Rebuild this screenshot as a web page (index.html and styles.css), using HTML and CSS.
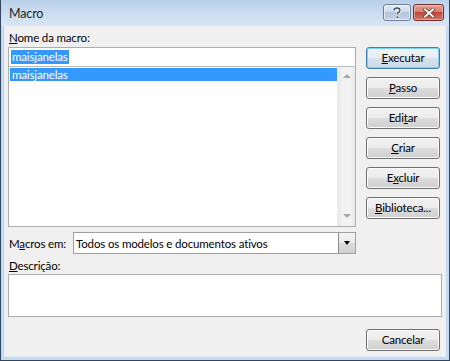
FILE: index.html
```html
<!DOCTYPE html>
<html lang="pt">
<head>
<meta charset="utf-8">
<title>Macro</title>
<link rel="stylesheet" href="styles.css">
</head>
<body>
<div class="window">
  <div class="titlebar">
    <span class="title">Macro</span>
    <div class="caption-buttons">
      <div class="cbtn help">
        <svg width="10" height="12" viewBox="0 0 10 12"><path d="M2 3.5 Q2 1 5 1 Q8 1 8 3.3 Q8 5 5.5 6 L5.5 7.5" fill="none" stroke="#fff" stroke-width="3"/><path d="M2 3.5 Q2 1 5 1 Q8 1 8 3.3 Q8 5 5.5 6 L5.5 7.5" fill="none" stroke="#3b4a5e" stroke-width="1.4"/><rect x="4.2" y="9" width="2.6" height="2.4" fill="#3b4a5e" stroke="#fff" stroke-width="0.6"/></svg>
      </div>
      <div class="cbtn close">
        <svg width="12" height="10" viewBox="0 0 12 10"><path d="M2 1.5 L10 8.5 M10 1.5 L2 8.5" stroke="#5a2a2a" stroke-width="3.4" stroke-linecap="square"/><path d="M2 1.5 L10 8.5 M10 1.5 L2 8.5" stroke="#fff" stroke-width="2" stroke-linecap="square"/></svg>
      </div>
    </div>
  </div>
  <div class="frame">
    <div class="client">
      <div class="top">
        <div class="left">
          <div class="label"><u>N</u>ome da macro:</div>
          <div class="input"><span class="sel">maisjanelas</span></div>
          <div class="list">
            <div class="items">
              <div class="item selected">maisjanelas</div>
            </div>
            <div class="scrollbar">
              <div class="arrow up"></div>
              <div class="arrow down"></div>
            </div>
          </div>
        </div>
        <div class="buttons">
          <div class="btn default"><u>E</u>xecutar</div>
          <div class="btn"><u>P</u>asso</div>
          <div class="btn">Edi<u>t</u>ar</div>
          <div class="btn"><u>C</u>riar</div>
          <div class="btn">E<u>x</u>cluir</div>
          <div class="btn"><u>B</u>iblioteca...</div>
        </div>
      </div>
      <div class="macros-row">
        <span class="label">M<u>a</u>cros em:</span>
        <div class="select">
          <span class="select-text">Todos os modelos e documentos ativos</span>
          <div class="drop"><span class="tri"></span></div>
        </div>
      </div>
      <div class="label desc-label"><u>D</u>escrição:</div>
      <div class="desc"></div>
      <div class="footer">
        <div class="btn">Cancelar</div>
      </div>
    </div>
  </div>
</div>
</body>
</html>
```
FILE: styles.css
```css
html, body {
  margin: 0;
  padding: 0;
  background: #ffffff;
}
body {
  font-family: Lato, "Noto Sans", sans-serif;
  font-size: 11.5px;
  letter-spacing: -0.15px;
  color: #000;
}
.window {
  width: 450px;
  height: 361px;
  box-sizing: border-box;
  border: 1px solid #31465f;
  border-top: none;
  display: flex;
  flex-direction: column;
  background: #c6d9ef;
}
.titlebar {
  height: 26px;
  flex: none;
  display: flex;
  align-items: flex-start;
  justify-content: space-between;
  background: linear-gradient(#b9d0ea, #cfdff2 60%, #d8e6f5);
}
.title {
  margin: 6px 0 0 8px;
  font-size: 12.5px;
  line-height: 16px;
  color: #1e1e1e;
}
.caption-buttons {
  display: flex;
  gap: 2px;
  margin: 4px 5px 0 0;
}
.cbtn {
  height: 17px;
  box-sizing: border-box;
  border: 1px solid #6d7f97;
  border-radius: 3px;
  display: flex;
  align-items: center;
  justify-content: center;
}
.cbtn.help {
  width: 28px;
  background: linear-gradient(#e3ecf7, #c9d8ea 50%, #b3c5dc 50%, #c4d5ea);
  box-shadow: inset 0 0 0 1px rgba(255,255,255,0.6);
}
.cbtn.close {
  width: 31px;
  border-color: #6e2f2a;
  background: linear-gradient(#e8a193, #d47b6c 50%, #c1463a 50%, #d0776a);
  box-shadow: inset 0 0 0 1px rgba(255,220,210,0.5);
}
.frame {
  flex: 1;
  display: flex;
  padding: 0 3px 3px 3px;
}
.client {
  flex: 1;
  background: #f0f0f0;
  border: 1px solid #e6edf6;
  border-top: none;
  padding: 4px 3px 0 3px;
  display: flex;
  flex-direction: column;
}
.label {
  line-height: 15px;
  height: 15px;
  padding-left: 1px;
  white-space: nowrap;
}
.top {
  display: flex;
  gap: 10px;
}
.left {
  width: 348px;
  display: flex;
  flex-direction: column;
}
.input {
  margin-top: 2px;
  height: 20px;
  box-sizing: border-box;
  border: 1px solid #abadb3;
  border-bottom: 1px solid #b7bcc3;
  background: #fff;
  padding: 2px 0 0 2px;
  line-height: 14px;
}
.sel {
  background: #3399ff;
  color: #fff;
  display: inline-block;
  padding: 0 1px;
}
.list {
  height: 160px;
  box-sizing: border-box;
  border: 1px solid #abadb3;
  border-top: none;
  background: #fff;
  display: flex;
}
.items {
  flex: 1;
  padding: 1px 0 0 1px;
}
.item {
  height: 13px;
  line-height: 13px;
  padding-left: 2px;
}
.item.selected {
  background: #3399ff;
  color: #fff;
}
.scrollbar {
  width: 17px;
  background: linear-gradient(90deg, #e8e8e8, #f3f3f3 30%, #f3f3f3 70%, #e8e8e8);
  border-left: 1px solid #ececec;
  display: flex;
  flex-direction: column;
  justify-content: space-between;
  align-items: center;
  padding: 7px 0 8px;
}
.arrow {
  width: 0;
  height: 0;
  border-left: 4px solid transparent;
  border-right: 4px solid transparent;
}
.arrow.up { border-bottom: 4px solid #a8a8a8; }
.arrow.down { border-top: 4px solid #a8a8a8; }
.buttons {
  display: flex;
  flex-direction: column;
  gap: 8px;
  margin-top: 17px;
}
.btn {
  width: 74px;
  height: 22px;
  box-sizing: border-box;
  border: 1px solid #707070;
  border-radius: 3px;
  background: linear-gradient(#f2f2f2, #ebebeb 50%, #dddddd 50%, #cfcfcf);
  box-shadow: inset 0 0 0 1px #fbfbfb;
  text-align: center;
  line-height: 19px;
  color: #000;
}
.btn.default {
  border-color: #3c7fb1;
  background: linear-gradient(#eef4f9, #e6eef5 50%, #d7e3ee 50%, #cbdae8);
  box-shadow: inset 0 0 0 1px #7fd0f5;
}
.macros-row {
  display: flex;
  align-items: center;
  margin-top: 5px;
  height: 22px;
}
.macros-row .label {
  width: 64px;
  flex: none;
}
.select {
  width: 283px;
  height: 22px;
  box-sizing: border-box;
  border: 1px solid #a0a0a0;
  background: #fff;
  display: flex;
  align-items: center;
  justify-content: space-between;
}
.select-text {
  padding-left: 2px;
}
.drop {
  width: 17px;
  height: 20px;
  box-sizing: border-box;
  border-left: 1px solid #8a8a8a;
  background: linear-gradient(#f2f2f2, #ebebeb 50%, #dddddd 50%, #cfcfcf);
  display: flex;
  align-items: center;
  justify-content: center;
}
.tri {
  width: 0;
  height: 0;
  border-left: 3.5px solid transparent;
  border-right: 3.5px solid transparent;
  border-top: 4px solid #000;
}
.desc-label {
  margin-top: 4px;
}
.desc {
  margin-top: 1px;
  height: 43px;
  box-sizing: border-box;
  border: 1px solid #abadb3;
  background: #fff;
}
.footer {
  display: flex;
  justify-content: flex-end;
  padding-right: 2px;
  margin-top: 12px;
}
```
